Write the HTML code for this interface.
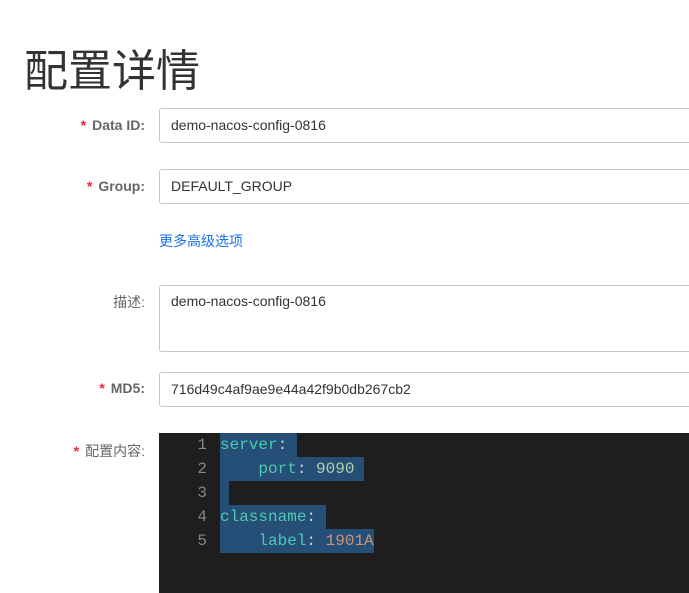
<!DOCTYPE html>
<html><head><meta charset="utf-8"><style>
body{margin:0;width:689px;height:583px;overflow:hidden;background:#fff;font-family:"Liberation Sans","Noto Sans CJK SC",sans-serif;position:relative}
.t{position:absolute;left:24px;top:42px;font-size:44px;color:#333;line-height:60px}
.l{position:absolute;right:544px;font-size:14px;font-weight:bold;color:#666;white-space:nowrap}
.l b{color:#f5222d;margin-right:6px}
.in{position:absolute;left:159px;width:560px;border:1px solid #c4c6cf;border-radius:3px;box-sizing:border-box;font-size:14px;color:#333;padding-left:11px}
.ed{position:absolute;left:159px;top:433px;width:540px;height:160px;background:#1e1e1e;font-family:"Liberation Mono",monospace;font-size:16px}
.ln{position:absolute;left:0;width:48px;text-align:right;color:#858585;height:24px;line-height:24px}
.cd{position:absolute;left:61px;height:24px;line-height:24px;white-space:pre;background:#264f78;color:#4ec9b0}
.n{color:#b5cea8}.s{color:#ce9178}.p{color:#d4d4d4}
</style></head><body>
<div class="t">配置详情</div>
<div class="l" style="top:117px"><b>*</b>Data ID:</div>
<div class="in" style="top:108px;height:35px;line-height:33px">demo-nacos-config-0816</div>
<div class="l" style="top:178px"><b>*</b>Group:</div>
<div class="in" style="top:169px;height:35px;line-height:33px">DEFAULT_GROUP</div>
<div style="position:absolute;left:159px;top:231px;font-size:14px;color:#1a73e8">更多高级选项</div>
<div class="l" style="top:292px;font-weight:normal;color:#666">描述:</div>
<div class="in" style="top:285px;height:67px;line-height:30px">demo-nacos-config-0816</div>
<div class="l" style="top:380px"><b>*</b>MD5:</div>
<div class="in" style="top:372px;height:35px;line-height:33px">716d49c4af9ae9e44a42f9b0db267cb2</div>
<div class="l" style="top:441px;font-weight:normal"><b>*</b>配置内容:</div>
<div class="ed">
<div class="ln" style="top:0">1</div><div class="ln" style="top:24px">2</div><div class="ln" style="top:48px">3</div><div class="ln" style="top:72px">4</div><div class="ln" style="top:96px">5</div>
<div class="cd" style="top:0;width:77px">server<span class="p">:</span></div>
<div class="cd" style="top:24px;width:144px">    port<span class="p">:</span> <span class="n">9090</span></div>
<div class="cd" style="top:48px;width:9px"> </div>
<div class="cd" style="top:72px;width:106px">classname<span class="p">:</span></div>
<div class="cd" style="top:96px;width:154px">    label<span class="p">:</span> <span class="s">1901A</span></div>
</div>
</body></html>
